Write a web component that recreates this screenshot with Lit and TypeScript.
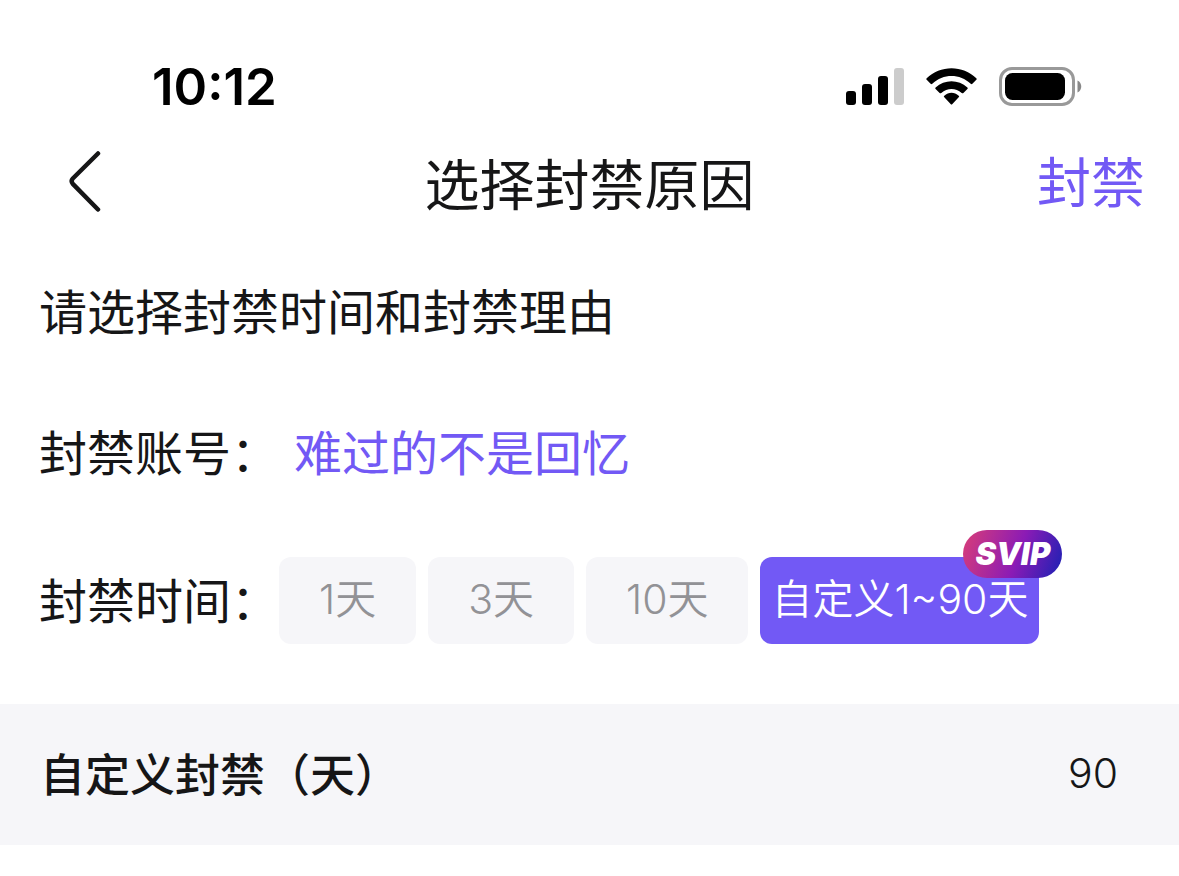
import { LitElement, html, css } from "lit";
import { customElement, state } from "lit/decorators.js";

interface BanOption {
  label: string;
  days: number;
  svip?: boolean;
}

const OPTIONS: BanOption[] = [
  { label: "1天", days: 1 },
  { label: "3天", days: 3 },
  { label: "10天", days: 10 },
  { label: "自定义1~90天", days: 90, svip: true },
];

@customElement("status-bar")
class StatusBar extends LitElement {
  static styles = css`
    :host {
      display: flex;
      align-items: center;
      justify-content: space-between;
      height: 60px;
      padding: 57px 96px 0 152px;
      color: #000;
    }
    .time {
      font: 600 51px/60px Inter, sans-serif;
    }
    .icons {
      display: flex;
      align-items: center;
      gap: 22px;
    }
    svg {
      display: block;
    }
  `;

  render() {
    return html`
      <time class="time">10:12</time>
      <div class="icons">
        <svg width="58" height="38" viewBox="0 0 58 38" role="img" aria-label="信号">
          <rect x="0" y="23" width="10" height="14" rx="3" />
          <rect x="16" y="16" width="10" height="21" rx="3" />
          <rect x="32" y="8" width="10" height="29" rx="3" />
          <rect x="48" y="0" width="10" height="37" rx="3" fill="#ccc" />
        </svg>
        <svg width="51" height="38" viewBox="0 0 51 38" role="img" aria-label="无线网络">
          <path d="M.7 11.800a1 1 0 0 1 0-1.500C14-3.200 37-3.200 50.300 10.300a1 1 0 0 1 0 1.500l-3.900 4a1.200 1.200 0 0 1-1.700 0C34 5.300 17 5.300 6.300 15.800a1.200 1.200 0 0 1-1.700 0z" />
          <path d="M9.600 20.900a1 1 0 0 1 0-1.500c9-8.300 22.800-8.300 31.800 0a1 1 0 0 1 0 1.500l-4 4a1.200 1.200 0 0 1-1.700 0c-6-5.200-14.400-5.200-20.400 0a1.200 1.200 0 0 1-1.700 0z" />
          <path d="M18.300 29.300a1 1 0 0 1 0-1.600c4.200-3.900 10.200-3.900 14.400 0a1 1 0 0 1 0 1.600l-6.300 6.600a1.200 1.200 0 0 1-1.800 0z" />
        </svg>
        <svg width="84" height="40" viewBox="0 0 84 40" role="img" aria-label="电池">
          <rect x="1.500" y="1.500" width="73" height="36" rx="11.500" fill="none" stroke="#999" stroke-width="3" />
          <rect x="6" y="6" width="60" height="27" rx="7.500" />
          <path d="M78.500 13.500c5 2 5 10 0 12z" fill="#888" />
        </svg>
      </div>
    `;
  }
}

@customElement("app-root")
class AppRoot extends LitElement {
  @state() private days = 90;
  @state() private selected = 3;

  static styles = css`
    :host {
      display: block;
      min-height: 100vh;
      background: #fff;
      color: #161617;
      font-family: "Noto Sans CJK SC", sans-serif;
      font-size: 48px;
      line-height: 72px;
    }
    button,
    input {
      border: 0;
      padding: 0;
      margin: 0;
      background: none;
      color: inherit;
      font: inherit;
    }
    button {
      cursor: pointer;
    }
    .header {
      display: grid;
      grid-template-columns: 1fr auto 1fr;
      align-items: center;
      padding: 24px 34px 0;
      height: 80px;
    }
    .back {
      justify-self: start;
      padding: 0 34px;
    }
    .back svg {
      display: block;
    }
    .title {
      margin: 0;
      font-size: 55px;
      font-weight: 400;
      line-height: 80px;
    }
    .submit {
      justify-self: end;
      color: #7259f5;
      font-size: 54px;
      line-height: 76px;
      padding-bottom: 2px;
    }
    .main {
      padding: 52px 39px 0;
    }
    .hint {
      margin: 0;
    }
    .account {
      display: flex;
      margin: 69px 0 0;
    }
    .name {
      padding-left: 15px;
      color: #7259f5;
    }
    .duration {
      display: flex;
      align-items: center;
      margin-top: 71px;
    }
    .label {
      flex: none;
    }
    .duration .label {
      padding-bottom: 6px;
    }
    .chips {
      display: flex;
      gap: 12px;
    }
    .chip {
      position: relative;
      height: 87px;
      padding: 0 40px 4px;
      border-radius: 12px;
      background: #f6f6f9;
      color: #929296;
      font-family: Inter, "Noto Sans CJK SC", sans-serif;
      font-size: 41px;
      font-weight: 350;
      white-space: nowrap;
    }
    .chip.selected {
      background: #7259f5;
      color: #fff;
    }
    .chip.wide {
      padding: 0 11px 4px;
    }
    .badge {
      position: absolute;
      top: -27px;
      right: -23px;
      width: 99px;
      height: 48px;
      border-radius: 24px;
      background: linear-gradient(110deg, #d43b7c 4%, #8b1bb5 55%, #2420b4 96%);
      color: #fff;
      font: italic 900 31px/48px Inter, sans-serif;
      text-align: center;
    }
    .custom {
      display: flex;
      align-items: center;
      justify-content: space-between;
      margin-top: 60px;
      padding: 33px 61px 36px 40px;
      background: #f6f6f9;
    }
    .custom-label {
      font-size: 45px;
      font-weight: 500;
    }
    .custom-value {
      width: 120px;
      font-family: Inter, "Noto Sans CJK SC", sans-serif;
      font-size: 41px;
      font-weight: 350;
      text-align: right;
      outline: none;
    }
  `;

  private onInput(e: Event) {
    this.days = Number((e.target as HTMLInputElement).value) || 0;
  }

  render() {
    return html`
      <status-bar></status-bar>
      <header class="header">
        <button class="back" aria-label="返回">
          <svg width="34" height="62" viewBox="0 0 34 62" fill="none" stroke="#161617" stroke-width="4.500" stroke-linecap="round" stroke-linejoin="round">
            <path d="M30 3.500 4.800 28.500Q2.500 31 4.800 33.800L30 59.500" />
          </svg>
        </button>
        <h1 class="title">选择封禁原因</h1>
        <button class="submit">封禁</button>
      </header>
      <main>
        <section class="main">
          <p class="hint">请选择封禁时间和封禁理由</p>
          <p class="account"><span class="label">封禁账号：</span><span class="name">难过的不是回忆</span></p>
          <div class="duration">
            <span class="label" id="duration-label">封禁时间：</span>
            <div class="chips" role="group" aria-labelledby="duration-label">
              ${OPTIONS.map(
                (o, i) => html`<button
                  class="chip ${o.svip ? "wide" : ""} ${i === this.selected ? "selected" : ""}"
                  aria-pressed=${i === this.selected}
                  @click=${() => (this.selected = i)}
                >${o.label}${o.svip ? html`<span class="badge">SVIP</span>` : ""}</button>`
              )}
            </div>
          </div>
        </section>
        <section class="custom">
          <label class="custom-label" for="days">自定义封禁（天）</label>
          <input class="custom-value" id="days" inputmode="numeric" .value=${String(this.days)} @input=${this.onInput} />
        </section>
      </main>
    `;
  }
}
